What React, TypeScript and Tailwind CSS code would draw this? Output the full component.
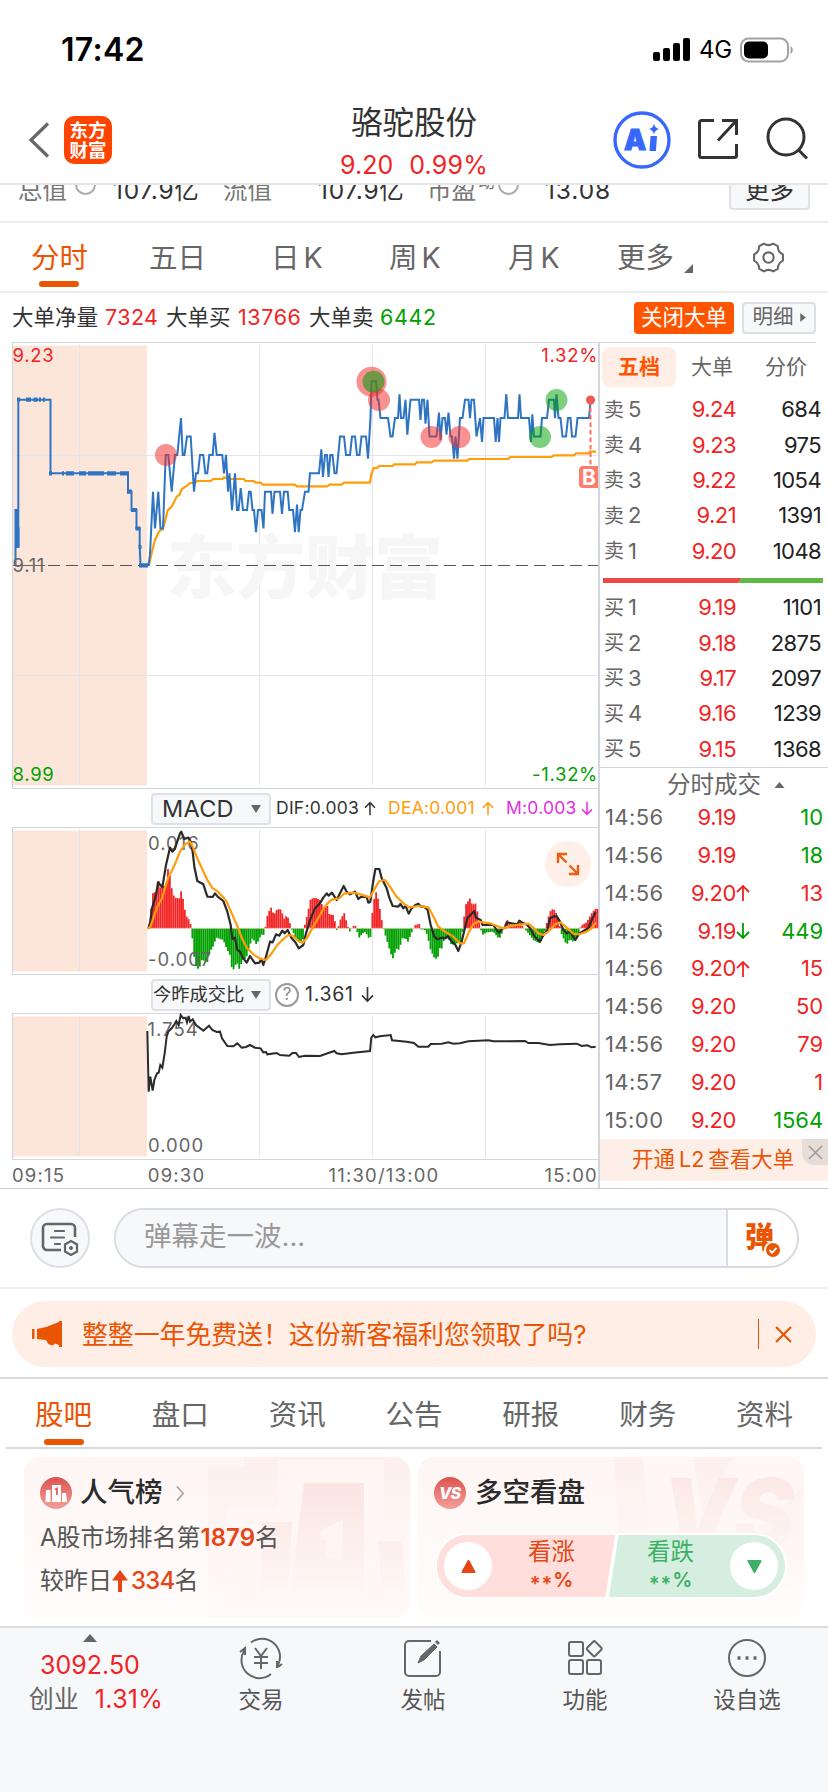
import type { ReactNode } from "react";

// Cada punto es [x, tick]; un tick equivale a 0.01 sobre el cierre anterior (9.11)
const PRE: [number, number][] = [
  [14.7, 0], [15.5, 0], [15.5, 3], [17.5, 3], [17.5, 1], [18.3, 1], [18.3, 9], [50.5, 9], [50.5, 5], [128, 5],
  [128, 4], [131.5, 4], [131.5, 3], [136.5, 3], [136.5, 2], [139.7, 2], [139.7, 1], [140.5, 0], [148.5, 0],
];

const PRICE: [number, number][] = [
  [148.5, 0], [150, 0.6], [153, 4], [155, 2], [158.3, 4], [160.5, 2], [163, 2], [165.7, 6], [168.3, 6], [171.7, 4],
  [175, 6], [177.3, 6], [181, 8], [182.7, 6], [184.5, 6], [187, 7], [190.7, 7], [194, 4], [196, 5], [198, 5],
  [200, 6], [203.3, 6], [205.3, 5], [207.3, 5], [209.3, 6], [212.7, 6], [214.5, 7.2], [216.7, 6], [222.3, 6],
  [224, 5], [226, 6], [228, 4], [229.5, 5], [232, 3], [235, 5], [237, 3], [238.5, 3], [240.7, 4.2], [243, 3],
  [247, 3], [249, 4], [250.7, 4], [252.5, 3], [254, 3], [256, 1.8], [258, 3], [261.5, 3], [263.5, 2], [265, 4],
  [271, 4], [272.5, 2.8], [274.5, 4], [280, 4], [282, 2.8], [284, 4], [287.7, 4], [289.3, 3], [293, 3], [295, 1.8],
  [297, 3.3], [298.7, 1.8], [300.5, 3], [302, 3], [305, 4], [308.5, 4], [310, 5], [319, 5], [321.3, 6.3], [323, 4.8],
  [325, 6], [327, 6], [328.5, 4.8], [330.3, 6], [332.5, 6], [334.5, 5], [336.5, 5], [340, 7], [344, 7], [346, 6],
  [350, 6], [352, 7], [355, 7], [357, 6], [359.5, 6], [361.5, 7], [366, 7], [368, 5.8], [370.5, 8], [371.5, 10],
  [376, 10], [377.5, 9], [378.5, 9], [380.5, 8], [388, 8], [390.5, 7], [392.5, 7], [395, 8], [398, 8], [399.5, 9.3],
  [401, 8], [403.5, 8], [405.5, 9], [407.3, 7.1], [410.5, 9], [419, 9], [420.5, 7.9], [422, 9], [424, 9], [425.5, 7.7],
  [427.5, 9], [429.5, 7], [436.5, 7], [439, 8.3], [440.5, 6.8], [442.5, 8], [445, 8], [446.5, 7.1], [448.5, 8.3],
  [450.5, 7], [452, 7], [454, 5.8], [455.5, 7], [457.5, 5.8], [460, 8], [462.5, 8], [465, 9], [468.5, 9], [470, 8],
  [471.5, 9], [474, 9], [476.5, 7], [480, 8], [482, 6.7], [483.5, 8], [494, 8], [495.7, 6.7], [497.5, 8], [499, 6.7],
  [500.5, 8], [504.5, 8], [506.3, 9.3], [508, 8], [518, 8], [519.5, 9.3], [521, 8], [529, 8], [531, 6.7], [532.3, 8.2],
  [534, 7], [540.5, 7], [542, 8], [547, 8], [549, 9], [554, 9], [555, 8], [556.5, 9.3], [558.5, 8], [560.5, 8],
  [562.5, 7], [566, 7], [568, 8], [570.5, 8], [572, 7], [575.5, 7], [577.5, 8], [589, 8], [590.7, 9], [594.5, 9],
];

const AVG =
  "441,706 448,700 455,670 465,630 478,603 488,598 495,575 503,541 515,530 530,500 538,495 545,478 560,468 570,459 585,458 592,453 632,453 640,447 668,447 672,442 688,447 732,447 736,453 760,453 768,458 782,458 788,464 885,464 890,469 982,469 988,464 1025,464 1032,458 1110,458 1113,438 1120,415 1132,413 1138,408 1178,408 1182,403 1245,403 1250,397 1295,397 1302,392 1402,392 1407,387 1525,387 1530,381 1655,381 1662,376 1722,376 1728,370 1765,370 1770,365 1788,365";

const DIF =
  "25,310 30,295 36,250 48,210 54,172 67,187 78,120 90,68 97,80 104,73 120,25 124,20 132,42 145,38 152,50 158,80 163,125 172,168 190,178 202,215 218,216 225,205 233,215 250,228 262,260 272,300 277,342 285,338 292,375 300,380 308,398 320,413 330,393 345,415 358,413 364,402 370,420 378,395 390,350 398,352 408,328 418,332 427,317 434,325 443,315 454,338 466,352 476,370 490,360 498,325 512,280 525,250 540,235 550,218 560,205 566,212 576,203 590,225 600,205 611,183 620,200 630,208 645,200 655,222 664,215 680,216 685,233 691,230 698,180 706,132 718,132 725,160 740,190 748,218 758,243 775,245 781,237 790,250 797,243 806,266 815,250 826,240 835,236 843,245 852,245 863,255 872,300 883,335 892,343 905,338 917,340 923,333 935,350 945,358 955,378 965,350 972,320 982,280 1003,258 1008,278 1022,285 1028,300 1060,300 1070,315 1078,323 1086,312 1095,308 1100,292 1115,295 1132,298 1138,287 1148,294 1160,298 1172,312 1182,332 1200,350 1210,330 1222,315 1230,280 1240,275 1250,273 1260,290 1270,315 1280,325 1290,320 1306,345 1318,325 1330,318 1345,310 1355,285 1367,262";

const DEA =
  "22,310 30,308 38,285 52,245 66,220 84,160 104,120 120,80 135,58 150,50 158,65 172,100 188,135 202,165 218,190 232,198 248,215 260,230 275,265 290,298 304,335 320,368 340,388 358,400 378,405 395,385 412,360 430,342 445,330 460,333 475,348 488,353 500,340 520,305 540,270 558,240 575,224 598,220 612,206 640,203 662,208 690,217 705,190 718,168 735,165 750,185 768,213 790,235 808,247 835,243 865,247 878,270 895,305 915,320 940,335 960,355 972,355 985,325 1000,297 1015,290 1050,295 1088,310 1115,302 1165,296 1180,308 1195,325 1210,330 1225,320 1245,298 1262,292 1280,308 1300,326 1318,328 1340,320 1355,310 1367,293";

const RATIO =
  "22,618 26,800 31,755 38,797 43,765 51,745 56,743 61,720 67,728 74,685 80,635 85,620 95,610 102,600 109,588 116,600 122,570 130,580 137,578 141,592 146,573 150,590 158,583 168,600 190,617 200,608 207,602 217,615 230,621 240,620 246,640 262,663 280,664 292,655 305,668 318,666 330,660 345,668 362,670 370,682 378,681 382,688 410,684 420,690 448,692 457,684 468,684 477,696 495,692 540,693 565,684 583,678 590,685 605,688 640,683 690,678 694,638 700,630 706,637 720,634 752,630 756,646 800,650 822,654 835,665 865,665 872,657 905,656 925,652 940,656 960,655 985,649 1045,646 1060,649 1155,648 1165,654 1195,654 1230,660 1260,658 1310,656 1325,663 1342,661 1355,667 1367,665";

// Histograma MACD: [x, altura], positivo en rojo y negativo en verde
const HIST: [number, number][] = [
  [25, 0], [30, 25], [38, 105], [50, 110], [57, 148], [62, 120], [70, 130], [77, 125], [84, 178], [92, 150], [97, 105],
  [105, 92], [118, 90], [125, 117], [131, 75], [138, 38], [148, 25], [154, 5], [156, -5], [158, -48], [164, -95],
  [170, -120], [178, -122], [184, -95], [195, -98], [202, -102], [210, -70], [222, -50], [228, -27], [240, -32],
  [250, -35], [260, -60], [270, -80], [277, -128], [283, -120], [290, -100], [298, -122], [308, -95], [318, -90],
  [328, -62], [335, -30], [342, -35], [350, -50], [358, -30], [368, -15], [374, -25], [377, 10], [383, 42], [393, 63],
  [402, 40], [412, 58], [424, 56], [432, 28], [440, 38], [447, 28], [453, 0], [458, -8], [468, -30], [478, -42],
  [488, -38], [493, -10], [495, 15], [502, 40], [512, 88], [525, 92], [540, 85], [550, 62], [562, 68], [568, 42],
  [580, 40], [587, 12], [590, -5], [594, 0], [602, 28], [613, 46], [620, 18], [626, -3], [630, -10], [634, 0],
  [645, 12], [650, -5], [658, -28], [668, -15], [676, -10], [688, -32], [694, -22], [697, 45], [703, 90], [709, 110],
  [715, 85], [722, 45], [728, 8], [733, -10], [742, -40], [752, -75], [760, -92], [768, -60], [778, -65], [786, -30],
  [797, -30], [804, -40], [812, -20], [820, 0], [826, 10], [838, 13], [845, -8], [852, 0], [862, -20], [872, -65],
  [885, -92], [893, -90], [900, -58], [908, -62], [912, -30], [925, -30], [935, -50], [950, -45], [962, -42],
  [968, -5], [972, 30], [978, 72], [990, 90], [997, 70], [1008, 75], [1014, 40], [1022, 0], [1027, -20], [1040, -12],
  [1060, -10], [1078, -32], [1088, -10], [1093, 5], [1102, 25], [1110, 8], [1122, 5], [1140, 20], [1150, 2],
  [1162, -10], [1180, -35], [1200, -45], [1212, -20], [1218, 8], [1230, 50], [1240, 60], [1252, 40], [1260, 5],
  [1266, -20], [1280, -50], [1290, -32], [1300, -40], [1315, -20], [1323, 8], [1340, 18], [1355, 45], [1365, 58],
  [1376, 58],
];

const valueAt = (x: number) => {
  const i = HIST.findIndex((p) => p[0] >= x);
  if (i <= 0) return 0;
  const [x0, y0] = HIST[i - 1];
  const [x1, y1] = HIST[i];
  return y0 + ((y1 - y0) * (x - x0)) / (x1 - x0);
};

const bars = Array.from({ length: 240 }, (_, i) => {
  const x = 25 + i * 5.625;
  return { x, v: valueAt(x + 2.8) };
});

const toPoints = (list: [number, number][]) =>
  list.map(([x, t]) => `${x},${(565.3 - t * 18.4).toFixed(1)}`).join(" ");

const sells = [
  ["5", "9.24", "684"],
  ["4", "9.23", "975"],
  ["3", "9.22", "1054"],
  ["2", "9.21", "1391"],
  ["1", "9.20", "1048"],
];

const buys = [
  ["1", "9.19", "1101"],
  ["2", "9.18", "2875"],
  ["3", "9.17", "2097"],
  ["4", "9.16", "1239"],
  ["5", "9.15", "1368"],
];

const trades = [
  { time: "14:56", price: "9.19", dir: "", vol: "10", up: false },
  { time: "14:56", price: "9.19", dir: "", vol: "18", up: false },
  { time: "14:56", price: "9.20", dir: "up", vol: "13", up: true },
  { time: "14:56", price: "9.19", dir: "down", vol: "449", up: false },
  { time: "14:56", price: "9.20", dir: "up", vol: "15", up: true },
  { time: "14:56", price: "9.20", dir: "", vol: "50", up: true },
  { time: "14:56", price: "9.20", dir: "", vol: "79", up: true },
  { time: "14:57", price: "9.20", dir: "", vol: "1", up: true },
  { time: "15:00", price: "9.20", dir: "", vol: "1564", up: false },
];

const Arrow = ({ down = false, className = "" }: { down?: boolean; className?: string }) => (
  <svg
    viewBox="0 0 14 18"
    fill="none"
    stroke="currentColor"
    strokeWidth="1.8"
    className={`shrink-0 ${down ? "rotate-180" : ""} ${className}`}
  >
    <path d="M7 17V2M1 8l6-6 6 6" />
  </svg>
);

const StatusBar = () => (
  <div className="flex h-[98px] items-center justify-between pt-[2px] pr-[34px] pl-[61px]">
    <span className="text-[32px] font-semibold tracking-[0.3px] text-black">17:42</span>
    <div className="flex items-center">
      <svg viewBox="0 0 38 24" className="h-6 w-[38px]">
        <rect x="0" y="14" width="7" height="9" rx="2" />
        <rect x="10" y="10" width="7" height="13" rx="2" />
        <rect x="20" y="5" width="7" height="18" rx="2" />
        <rect x="30" y="0" width="7" height="23" rx="2" />
      </svg>
      <span className="ml-[8px] w-[41px] text-[24px] tracking-[-0.3px] text-black">4G</span>
      <svg viewBox="0 0 54 26" className="h-[26px] w-[54px]">
        <rect x="1" y="1.5" width="47" height="23" rx="7.5" fill="none" stroke="#a3a3a3" strokeWidth="2" />
        <rect x="4" y="4.5" width="24" height="17" rx="5" />
        <path d="M50.5 9c3 1.5 3 6.500 0 8z" fill="#a3a3a3" />
      </svg>
    </div>
  </div>
);

const Header = () => (
  <header className="flex h-[87px] justify-between border-b-2 border-[#e6e6e8] pr-[19px] pl-[28px]">
    <div className="mt-[18px] flex w-[281px] items-start">
      <svg viewBox="0 0 22 36" className="mt-[6px] h-9 w-[22px]" fill="none" stroke="#666" strokeWidth="3.2">
        <path d="M20 1.5L3 18l17 16.5" />
      </svg>
      <div className="ml-[14px] flex size-12 flex-col items-center justify-center rounded-[10px] bg-[#ff4400] text-[18.5px] leading-[20px] font-bold text-white">
        <span>东方</span>
        <span>财富</span>
      </div>
    </div>
    <div className="flex w-[190px] flex-col items-center">
      <span className="mt-[5px] text-[31.5px] leading-[40px] text-[#333]">骆驼股份</span>
      <div className="mt-[4px] flex gap-[16px] text-[25px] leading-[36px] text-[#f22323]">
        <span>9.20</span>
        <span className="tracking-[0.2px]">0.99%</span>
      </div>
    </div>
    <div className="mt-[13px] flex w-[290px] items-start justify-end">
      <svg viewBox="0 0 58 58" className="mr-[26px] size-[58px]">
        <circle cx="29" cy="29" r="27" fill="none" stroke="#3768fb" strokeWidth="3.4" />
        <text x="11" y="39" fontSize="28" fontWeight="900" fill="#3768fb" stroke="#3768fb" strokeWidth="1">A</text>
        <path d="M37.5 25h6.500l-1 15h-6.500z" fill="#3768fb" />
        <path d="M41 12.500q.8 4.500 5 5.500-4.200 1-5 5.500-.8-4.500-5-5.500 4.200-1 5-5.500z" fill="#3768fb" />
      </svg>
      <svg viewBox="0 0 42 42" className="mt-[7px] mr-[26px] size-[42px]" fill="none" stroke="#333" strokeWidth="3">
        <path d="M17 2.500H4.500a2 2 0 0 0-2 2v33a2 2 0 0 0 2 2h33a2 2 0 0 0 2-2V26M25 2.500h14.500V17M39.500 2.500L21 22.500" />
      </svg>
      <svg viewBox="0 0 44 44" className="mt-[6px] size-[44px]" fill="none" stroke="#333" strokeWidth="3">
        <circle cx="21" cy="20" r="18" />
        <path d="M33 32.500l9 9" />
      </svg>
    </div>
  </header>
);

const Ring = ({ className = "" }: { className?: string }) => (
  <span className={`size-[21px] shrink-0 rounded-full border-2 border-[#aaa] ${className}`} />
);

// Fila de datos que queda cortada bajo la cabecera al hacer scroll
const SummaryRow = () => (
  <div className="h-[38px] overflow-hidden border-b-2 border-[#ececee]">
    <div className="-mt-[18px] flex h-[46px] items-center pl-[18px] text-[24.5px] text-[#333]">
      <span className="w-[57px] text-[#777]">总值</span>
      <Ring className="-mt-[12px]" />
      <span className="ml-[17px] w-[110px] tracking-[0.7px]">107.9亿</span>
      <span className="w-[95px] text-[#777]">流值</span>
      <span className="w-[109px] tracking-[0.7px]">107.9亿</span>
      <span className="w-[51px] text-[#777]">市盈</span>
      <span className="-mt-[15px] w-[20px] text-[17px] text-[#777]">动</span>
      <Ring className="-mt-[12px]" />
      <span className="ml-[26px] w-[184px] tracking-[0.9px]">13.08</span>
      <span className="flex h-[40px] w-[81px] items-center justify-center rounded-[4px] border-2 border-[#dfe1e6] bg-[#f7f8fa]">
        更多
      </span>
    </div>
  </div>
);

const PeriodTabs = () => (
  <nav className="flex h-[70px] items-start border-b-2 border-[#ececee] pt-[15px] pl-[31px] text-[28.5px] leading-[40px] text-[#666]">
    <div className="flex w-[118px] flex-col text-[#ea5504]">
      <span>分时</span>
      <span className="mt-[3px] ml-[8px] h-[6px] w-[40px] rounded-[3px] bg-[#ea5504]" />
    </div>
    <span className="w-[122px]">五日</span>
    <span className="w-[118px]">日<span className="ml-[4px]">K</span></span>
    <span className="w-[119px]">周<span className="ml-[4px]">K</span></span>
    <span className="w-[109px]">月<span className="ml-[4px]">K</span></span>
    <span className="w-[67px]">更多</span>
    <svg viewBox="0 0 10 10" className="mt-[26px] mr-[59px] size-[9px]" fill="#666">
      <path d="M10 0v10H0z" />
    </svg>
    <svg viewBox="0 0 32 32" className="mt-[3px] size-[33px]" fill="none" stroke="#666" strokeWidth="2" strokeLinejoin="round">
      <path d="M11.500 2.500Q16 5.500 20.500 2.500L25 5Q25 10.500 30 13V19Q25 21.500 25 27L20.500 29.500Q16 26.500 11.500 29.500L7 27Q7 21.500 2 19V13Q7 10.500 7 5Z" />
      <circle cx="16" cy="16" r="5" />
    </svg>
  </nav>
);

const BigOrderRow = () => (
  <div className="flex h-[50px] items-center pr-[12px] pb-[1px] pl-[12px] text-[21.5px] text-[#333]">
    <span className="w-[93px]">大单净量</span>
    <span className="w-[61px] tracking-[0.4px] text-[#f22323]">7324</span>
    <span className="w-[72px]">大单买</span>
    <span className="w-[71px] tracking-[0.6px] text-[#f22323]">13766</span>
    <span className="w-[71px]">大单卖</span>
    <span className="tracking-[0.6px] text-[#00a000]">6442</span>
    <span className="ml-auto flex h-[32px] w-[100px] items-center justify-center rounded-[4px] bg-[#ff5500] text-white">关闭大单</span>
    <span className="ml-[8px] flex h-[32px] w-[74px] items-center justify-center rounded-[4px] border-2 border-[#dcdfe6] bg-[#f7f8fa] text-[20.5px] text-[#666]">
      明细
      <svg viewBox="0 0 6 10" className="ml-[6px] h-[9px] w-[6px]" fill="#666">
        <path d="M0 0l6 5-6 5z" />
      </svg>
    </span>
  </div>
);

const Grid = ({ top, bottom }: { top: number; bottom: number }) => (
  <>
    <rect x="13" y={top + 3} width="134" height={bottom - top - 6} fill="#fce6da" />
    <path
      d={[79.5, 259.5, 372.5, 485.5].map((x) => `M${x} ${top + 2}V${bottom - 3}`).join("")}
      stroke="#e3e4ec"
    />
    <path d={`M12.5 ${bottom}V${top}H599M12 ${bottom}H599`} fill="none" stroke="#d3d6dd" strokeWidth="1.2" />
  </>
);

const PriceChart = () => (
  <svg viewBox="0 342 600 447" className="block h-[447px] w-[600px] shrink-0" fontSize="18.5">
    <Grid top={342.5} bottom={788.5} />
    <path d="M13 455.500H598M13 675.500H598" stroke="#e3e4ec" />
    <text x="167" y="593" fontSize="69" fontWeight="900" fill="#f6f6f6">东方财富</text>
    <path d="M34 565.500H598" stroke="#555" strokeDasharray="12 6" strokeDashoffset="-14" />
    <path d="M13 565.500H45" stroke="#666" />
    <g fill="none" strokeWidth="2">
      <g transform="translate(0 330) scale(.33333)" stroke="#ff9d0a" strokeWidth="2.2">
        <polyline vectorEffect="non-scaling-stroke" points={AVG} />
      </g>
      <g stroke="#2f74c3">
        <polyline points={toPoints(PRE)} />
        <path d="M15 529h3v17h-3M17 510v36" strokeWidth="3" />
        <path
          d="M17 399.700h3M26 399.700h5M33.500 399.700h4M39 399.700h2M43 399.700h2M49 473.300h3M62 473.300h2M66 473.300h8M79 473.300h7M88 473.300h16M107 473.300h9M120 473.300h9M127 491.700h5M131 510h6M135.500 528.500h5M138.500 547h3M139 565.300h9"
          strokeWidth="4.2"
        />
        <polyline points={toPoints(PRICE)} />
      </g>
    </g>
    <g fill="#f42c2c" fillOpacity=".52">
      <circle cx="166" cy="455" r="11" />
      <circle cx="371.5" cy="381.7" r="15" />
      <circle cx="379" cy="400" r="11" />
      <circle cx="431.5" cy="437" r="11" />
      <circle cx="459.5" cy="437" r="11" />
    </g>
    <circle cx="373.5" cy="381.7" r="11" fill="#2f9a20" fillOpacity=".68" />
    <g fill="#00a000" fillOpacity=".5">
      <circle cx="556.5" cy="400" r="11" />
      <circle cx="540" cy="437" r="11" />
    </g>
    <path d="M590.500 400v66" stroke="#ff6f61" strokeWidth="2" strokeDasharray="4.5 3" />
    <circle cx="590.5" cy="400" r="4.5" fill="#ee5b54" />
    <path d="M598 466h-15a4 4 0 0 0-4 4v14a4 4 0 0 0 4 4h15z" fill="#ff7c6d" />
    <text x="582" y="484.5" fontSize="21" fontWeight="700" fill="#fff">B</text>
    <g letterSpacing=".7">
      <text x="12.5" y="361.5" fill="#f22323">9.23</text>
      <text x="598" y="361.5" fill="#f22323" textAnchor="end">1.32%</text>
      <text x="12.5" y="572" fill="#666">9.11</text>
      <text x="12.5" y="780.5" fill="#00a000">8.99</text>
      <text x="598" y="780.5" fill="#00a000" textAnchor="end">-1.32%</text>
    </g>
  </svg>
);

const Select = ({ children, className }: { children: ReactNode; className: string }) => (
  <span className={`flex h-[32px] w-[120px] shrink-0 items-center rounded-[4px] border-2 border-[#dee1e7] bg-[#f7f8fa] text-[#333] ${className}`}>
    {children}
    <svg viewBox="0 0 10 8" className="mr-[8px] ml-auto h-[8px] w-[10px]" fill="#666">
      <path d="M0 0h10L5 8z" />
    </svg>
  </span>
);

const MacdChart = () => (
  <>
    <div className="flex h-[38px] items-center pt-px pl-[151px] text-[17.5px] tracking-[0.25px] text-[#333]">
      <Select className="pl-[9px] text-[23.5px]">MACD</Select>
      <span className="ml-[5px] w-[88px]">DIF:0.003</span>
      <Arrow className="h-[15px] w-[12px]" />
      <span className="ml-[12px] w-[94px] text-[#ff9d0a]">DEA:0.001</span>
      <Arrow className="h-[15px] w-[12px] text-[#ff9d0a]" />
      <span className="ml-[12px] w-[75px] text-[#e22fe2]">M:0.003</span>
      <Arrow down className="h-[15px] w-[12px] text-[#e22fe2]" />
    </div>
    <div className="relative">
      <svg viewBox="0 827 600 148" className="block h-[148px] w-[600px]" fontSize="18.5">
        <Grid top={827.5} bottom={974.5} />
        <g transform="translate(140 825) scale(.33333)">
          {bars.map(({ x, v }) => (
            <rect
              key={x}
              x={x}
              y={v > 0 ? 310 - v : 310}
              width="5.4"
              height={Math.abs(v)}
              fill={v > 0 ? "#f42323" : "#00a000"}
            />
          ))}
          <path d="M25 310H1374" stroke="#f0c8b8" strokeWidth="2" />
        </g>
        <text x="148" y="849.5" fill="#666" letterSpacing="1">0.016</text>
        <text x="148" y="965.5" fill="#666" letterSpacing="1">-0.007</text>
        <g transform="translate(140 825) scale(.33333)" fill="none" strokeWidth="2.2" strokeLinejoin="round">
          <polyline vectorEffect="non-scaling-stroke" stroke="#2b2b2b" points={DIF} />
          <polyline vectorEffect="non-scaling-stroke" stroke="#ff9d0a" points={DEA} />
        </g>
      </svg>
      <span className="absolute top-[14px] right-[7px] flex size-[46px] items-center justify-center rounded-full bg-[#fef0e8]">
        <svg viewBox="0 0 24 24" className="size-[24px]" fill="none" stroke="#ee5d10" strokeWidth="2.4">
          <path d="M2 11V2h9M2 2l8.500 8.500M22 13v9h-9M22 22l-8.500-8.500" />
        </svg>
      </span>
    </div>
  </>
);

const RatioChart = () => (
  <>
    <div className="flex h-[38px] items-center pt-px pl-[151px] text-[19.5px] text-[#333]">
      <Select className="text-[18.3px]">今昨成交比</Select>
      <span className="ml-[4px] flex size-[24px] items-center justify-center rounded-full border-2 border-[#999] text-[17px] text-[#888]">
        ?
      </span>
      <span className="ml-[6px] w-[55px] tracking-[0.7px]">1.361</span>
      <Arrow down className="ml-px h-[17px] w-[13px]" />
    </div>
    <svg viewBox="0 1013 600 147" className="block h-[147px] w-[600px]" fontSize="18.5">
      <Grid top={1013.5} bottom={1159.5} />
      <text x="147.5" y="1035.5" fill="#666" letterSpacing="1">1.754</text>
      <text x="148" y="1151.5" fill="#666" letterSpacing="1">0.000</text>
      <polyline
        transform="translate(140 825) scale(.33333)"
        vectorEffect="non-scaling-stroke"
        fill="none"
        stroke="#2b2b2b"
        strokeWidth="2"
        points={RATIO}
      />
    </svg>
    <div className="flex h-[28px] items-center pt-[3px] pl-[12px] text-[18.5px] tracking-[1.2px] text-[#666]">
      <span className="w-[136px]">09:15</span>
      <span className="w-[181px]">09:30</span>
      <span className="w-[200px]">11:30/13:00</span>
      <span className="w-[70px] text-right">15:00</span>
    </div>
  </>
);

const Level = ({ side, row }: { side: string; row: string[] }) => (
  <div className="flex h-[35.4px] items-center pr-[7px] pl-[4px] text-[22px] tracking-[-0.6px]">
    <span className="w-[24px] text-[20px] text-[#666]">{side}</span>
    <span className="w-[40px] text-[#666]">{row[0]}</span>
    <span className="w-[68px] text-right text-[#f22323]">{row[1]}</span>
    <span className="ml-auto text-[#222]">{row[2]}</span>
  </div>
);

const OrderBook = () => (
  <aside className="flex w-[230px] flex-col border-l-2 border-[#d3d6dd]">
    <div className="mr-[12px] border-t border-[#d3d6dd]" />
    <div className="mt-[4px] flex h-[40px] items-center pl-[2px] text-[21px] text-[#666]">
      <span className="flex h-[40px] w-[74px] items-center justify-center rounded-[8px] bg-[#ffeee5] font-bold text-[#ff5500]">五档</span>
      <span className="ml-[15px] w-[74px]">大单</span>
      <span>分价</span>
    </div>
    <div className="mt-[5px]">
      {sells.map((row) => (
        <Level key={row[0]} side="卖" row={row} />
      ))}
    </div>
    <svg viewBox="0 0 220 5" className="mt-[9px] mb-[7px] ml-[3px] h-[5px] w-[220px] shrink-0">
      <path d="M0 0h139l-4 5H0z" fill="#ec4848" />
      <path d="M139 0h81v5h-85z" fill="#5db946" />
    </svg>
    <div>
      {buys.map((row) => (
        <Level key={row[0]} side="买" row={row} />
      ))}
    </div>
    <div className="flex h-[32px] shrink-0 items-center border-t border-[#d3d6dd] pt-[3px] pl-[67px] text-[23.5px] text-[#666]">
      分时成交
      <svg viewBox="0 0 10 6" className="ml-[13px] h-[6px] w-[11px]" fill="#666">
        <path d="M0 6l5-6 5 6z" />
      </svg>
    </div>
    {trades.map((t, i) => (
      <div key={i} className="flex h-[37.8px] shrink-0 items-center pr-[5px] pl-[5px] text-[22px] tracking-[-0.4px]">
        <span className="w-[66px] tracking-[0.4px] text-[#666]">{t.time}</span>
        <span className="w-[65px] text-right text-[#f22323]">{t.price}</span>
        {t.dir === "up" && <Arrow className="h-[18px] w-[14px] text-[#f22323]" />}
        {t.dir === "down" && <Arrow down className="h-[18px] w-[14px] text-[#00a000]" />}
        <span className={`ml-auto tracking-[-0.1px] ${t.up ? "text-[#f22323]" : "text-[#00a000]"}`}>{t.vol}</span>
      </div>
    ))}
    <div className="relative flex h-[42px] shrink-0 items-center bg-[#fdefe8] pb-[2px] pl-[32px] text-[21.5px] text-[#ea5504]">
      开通<span className="mx-[4px]">L2</span>查看大单
      <span className="absolute top-0 right-0 flex size-[26px] items-center justify-center rounded-bl-[12px] bg-[#e6dcd8]">
        <svg viewBox="0 0 16 16" className="size-[15px]" fill="none" stroke="#999" strokeWidth="1.6">
          <path d="M1 1l14 14M15 1L1 15" />
        </svg>
      </span>
    </div>
  </aside>
);

const CommentBar = () => (
  <div className="flex h-[101px] items-center border-t border-b-2 border-t-[#c9ccd3] border-b-[#ececee] pl-[30px]">
    <span className="flex size-[60px] items-center justify-center rounded-full border-2 border-[#dcdfe6] bg-[#f7f8fa]">
      <svg viewBox="0 0 38 34" className="mt-[2px] h-[34px] w-[38px]" fill="none" stroke="#666" strokeWidth="2.6">
        <path d="M20 28H6a4 4 0 0 1-4-4V6a4 4 0 0 1 4-4h24a4 4 0 0 1 4 4v9" />
        <path d="M14 9h9M10 15.500h13M14 22h5" strokeLinecap="round" strokeWidth="2.2" />
        <path d="M30 19l6 3.500v7L30 33l-6-3.500v-7z" strokeWidth="2.2" />
        <circle cx="30" cy="26" r="1.5" fill="#666" strokeWidth="1" />
      </svg>
    </span>
    <div className="ml-[24px] flex h-[60px] w-[685px] overflow-hidden rounded-full border-2 border-[#d8dbe2]">
      <span className="flex w-[612px] items-center border-r-2 border-[#d8dbe2] bg-[#f7f8fa] pb-[3px] pl-[28px] text-[27.5px] text-[#999]">弹幕走一波...</span>
      <span className="relative pl-[17px] text-[29px] leading-[56px] font-black text-[#ea5504]">
        弹
        <svg viewBox="0 0 18 18" className="absolute top-[31px] left-[36px] size-[18px]">
          <circle cx="9" cy="9" r="8" fill="#ea5504" stroke="#fff" strokeWidth="2" />
          <path d="M5.500 9l2.500 2.800 4.500-5" fill="none" stroke="#fff" strokeWidth="1.8" />
        </svg>
      </span>
    </div>
  </div>
);

const Promo = () => (
  <div className="h-[90px] border-b-2 border-[#d8dae0] pt-[12px]">
    <div className="mx-[12px] flex h-[66px] items-center rounded-full bg-[#feeee6] pr-[24px] pl-[20px] text-[26px] tracking-[-0.15px] text-[#ea5504]">
      <svg viewBox="0 0 30 26" className="mr-[20px] h-[26px] w-[30px]" fill="#ea5504">
        <path d="M0 8h2.500v10H0zM5 8l9-2L27 1V0h3v26h-3v-2l-4-1.500c-1 2.500-5 2-7 0L14 19l-9-1z" />
      </svg>
      整整一年免费送！这份新客福利您领取了吗?
      <span className="ml-auto h-[30px] w-[1.5px] bg-[#ea5504]" />
      <svg viewBox="0 0 16 16" className="ml-[16px] size-[17px]" fill="none" stroke="#ea5504" strokeWidth="2">
        <path d="M1 1l14 14M15 1L1 15" />
      </svg>
    </div>
  </div>
);

const SectionTabs = () => (
  <nav className="mx-[6px] flex h-[70px] justify-between border-b-2 border-[#d8dae0] px-[29px] pt-[16px] text-[28.5px] leading-[40px] text-[#666]">
    {["股吧", "盘口", "资讯", "公告", "研报", "财务", "资料"].map((name, i) => (
      <div key={name} className={`flex flex-col items-center ${i === 0 ? "text-[#ea5504]" : ""}`}>
        <span>{name}</span>
        {i === 0 && <span className="mt-[4px] h-[6px] w-[40px] rounded-[3px] bg-[#ea5504]" />}
      </div>
    ))}
  </nav>
);

const Badge = ({ children }: { children: ReactNode }) => (
  <svg viewBox="0 0 32 32" className="size-[32px]">
    <defs>
      <linearGradient id="badge" x1="0" y1="0" x2="0" y2="1">
        <stop offset="0" stopColor="#dc5350" />
        <stop offset="1" stopColor="#f3a09b" />
      </linearGradient>
    </defs>
    <circle cx="16" cy="16" r="16" fill="url(#badge)" />
    {children}
  </svg>
);

const Cards = () => (
  <div className="flex h-[177px] gap-[8px] px-[24px] pt-[8px]">
    <section className="relative h-[161px] w-[386px] overflow-hidden rounded-[16px] bg-linear-to-b from-[#fef6f4] to-[#fffcfb] pt-[16px] pl-[16px] text-[24px] text-[#555]">
      <svg viewBox="0 0 386 161" className="absolute inset-0 h-full w-full">
        <defs>
          <linearGradient id="podium" x1="0" y1="0" x2="0" y2="1">
            <stop offset="0" stopColor="#fbe5e2" />
            <stop offset="1" stopColor="#fef8f6" />
          </linearGradient>
          <linearGradient id="halo" x1="0" y1="0" x2="0" y2="1">
            <stop offset="0" stopColor="#fdf0ee" />
            <stop offset="1" stopColor="#fffaf9" />
          </linearGradient>
        </defs>
        <path d="M184 9h36V0h166v161H184z" fill="url(#halo)" />
        <path d="M203 51h51V3h106v60h26v98H203z" fill="#fff8f6" fillOpacity=".7" />
        <path d="M280 26h60v115h-75zM238 65h30l-4 76h-28zM354 84h24l4 57h-24z" fill="url(#podium)" />
        <path d="M297 73l22-10-2 38h-15V83l-6 1z" fill="#fff6f4" />
      </svg>
      <div className="relative flex h-[40px] items-center">
        <Badge>
          <path d="M6 13h4.500v12H5.500zM12 8h9v17h-9zM22 16h4l1 9h-5z" fill="#fff" />
          <path d="M15 12.500l2-1V18" fill="none" stroke="#e0605c" strokeWidth="1.8" />
        </Badge>
        <span className="ml-[8px] text-[27.5px] font-medium text-[#2b2b2b]">人气榜</span>
        <svg viewBox="0 0 10 18" className="ml-[13px] h-[17px] w-[9px]" fill="none" stroke="#aaa" strokeWidth="2">
          <path d="M1 1l7 8-7 8" />
        </svg>
      </div>
      <div className="relative mt-[7px] h-[36px] leading-[36px]">
        A股市场排名第<span className="font-semibold text-[#e54615]">1879</span>名
      </div>
      <div className="relative mt-[7px] flex h-[36px] items-center">
        较昨日
        <svg viewBox="0 0 16 22" className="mr-[3px] h-[22px] w-[16px]" fill="#e54615">
          <path d="M8 0l8 10.500h-6V22H6V10.500H0z" />
        </svg>
        <span className="font-medium tracking-[-0.8px] text-[#e54615]">334</span>名
      </div>
    </section>
    <section className="relative h-[161px] w-[386px] overflow-hidden rounded-[16px] bg-linear-to-b from-[#fef6f4] to-[#fffcfb] pt-[16px] pl-[16px]">
      <svg viewBox="0 0 386 161" className="absolute inset-0 h-full w-full">
        <path d="M196 0h190v140L300 80l-60 60h-36z" fill="url(#halo)" />
        <path d="M225 0h50l10 60 30-60h71v30l-90 80h-60z" fill="#fff8f6" fillOpacity=".8" />
        <text x="244" y="91" fontSize="96" fontWeight="900" fontStyle="italic" fill="url(#podium)" textLength="132" lengthAdjust="spacingAndGlyphs">VS</text>
      </svg>
      <div className="relative flex h-[40px] items-center">
        <Badge>
          <text x="15.5" y="22" fontSize="16" fontWeight="800" fontStyle="italic" textAnchor="middle" fill="#fff" letterSpacing="-1">VS</text>
        </Badge>
        <span className="ml-[9px] text-[27.5px] font-medium text-[#2b2b2b]">多空看盘</span>
      </div>
      <div className="relative mt-[20px] ml-[1px] flex h-[66px] w-[352px] overflow-hidden rounded-full border-2 border-white">
        <svg viewBox="0 0 348 62" className="absolute inset-0 h-full w-full" preserveAspectRatio="none">
          <path d="M0 0h348v62H0z" fill="#d6eedf" />
          <path d="M0 0h180l-10 62H0z" fill="#ffdedb" />
          <path d="M180 -1l-10 64" stroke="#fff" strokeWidth="3.5" />
        </svg>
        <div className="relative flex w-full items-center justify-between px-[7px]">
          <span className="flex size-[48px] items-center justify-center rounded-full bg-white">
            <svg viewBox="0 0 16 13" className="h-[13px] w-[17px]" fill="#e54615" stroke="#e54615" strokeWidth="2" strokeLinejoin="round">
              <path d="M8 1l6 11H2z" />
            </svg>
          </span>
          <div className="flex flex-1 flex-col items-center text-[23.5px] leading-[28px] text-[#e54615]">
            <span>看涨</span>
            <span className="text-[20px] font-semibold"><span className="relative top-[4px] tracking-[1px]">**</span>%</span>
          </div>
          <div className="flex flex-1 flex-col items-center text-[23.5px] leading-[28px] text-[#3cb166]">
            <span>看跌</span>
            <span className="text-[20px] font-semibold"><span className="relative top-[4px] tracking-[1px]">**</span>%</span>
          </div>
          <span className="flex size-[48px] items-center justify-center rounded-full bg-white">
            <svg viewBox="0 0 16 13" className="h-[13px] w-[17px]" fill="#3cb166" stroke="#3cb166" strokeWidth="2" strokeLinejoin="round">
              <path d="M8 12L2 1h12z" />
            </svg>
          </span>
        </div>
      </div>
    </section>
  </div>
);

const NavItem = ({ label, children }: { label: string; children: ReactNode }) => (
  <div className="flex w-[162px] flex-col items-center text-[22.5px] leading-[32px] text-[#555]">
    <svg viewBox="0 0 44 44" className="mt-[8px] mb-[4px] size-[44px]" fill="none" stroke="#666" strokeWidth="2">
      {children}
    </svg>
    {label}
  </div>
);

const BottomNav = () => (
  <footer className="flex h-[166px] border-t-2 border-[#dcdee2] bg-[#f7f8fa]">
    <div className="flex w-[180px] flex-col items-center text-[25px] leading-[34px] text-[#f22323]">
      <svg viewBox="0 0 14 8" className="mt-[6px] h-[8px] w-[14px]" fill="#666">
        <path d="M0 8l7-8 7 8z" />
      </svg>
      <span className="mt-[6px]">3092.50</span>
      <span className="ml-[12px] tracking-[0.3px]">
        <span className="mr-[16px] tracking-normal text-[#666]">创业</span>1.31%
      </span>
    </div>
    <NavItem label="交易">
      <path d="M12 6.500A18 18 0 0 1 39 29l-1 2.500M39 31l4-3M38 32v-7M32 38A18 18 0 0 1 5 15l.5-1.500M1 16l5-4v7" />
      <path d="M16 12l6 8 6-8M22 20v13M15 21h14M15 27h14" />
    </NavItem>
    <NavItem label="发帖">
      <path d="M30 5H8a4 4 0 0 0-4 4v27a4 4 0 0 0 4 4h27a4 4 0 0 0 4-4V15" />
      <path d="M17 27l3-7L33 8l3 3-13 13z" fill="#666" strokeWidth="1" />
      <path d="M35.500 7.500l2-2" strokeWidth="4" />
    </NavItem>
    <NavItem label="功能">
      <rect x="6" y="6" width="14" height="14" rx="2" />
      <rect x="6" y="24" width="14" height="14" rx="2" />
      <rect x="24" y="24" width="14" height="14" rx="2" />
      <rect x="25.5" y="7" width="11.5" height="11.5" rx="1.5" transform="rotate(45 31.250 12.750)" />
    </NavItem>
    <NavItem label="设自选">
      <circle cx="22" cy="22" r="18" />
      <path d="M12.500 22h3M20.500 22h3M28.500 22h3" strokeWidth="3.5" />
    </NavItem>
  </footer>
);

const App = () => {
  return (
    <div className="w-[828px] overflow-hidden bg-white font-['Inter','Noto_Sans_CJK_SC',sans-serif]">
      <StatusBar />
      <Header />
      <SummaryRow />
      <PeriodTabs />
      <BigOrderRow />
      <div className="-mt-px flex h-[846px]">
        <div className="flex w-[598px] shrink-0 flex-col">
          <PriceChart />
          <MacdChart />
          <RatioChart />
        </div>
        <OrderBook />
      </div>
      <CommentBar />
      <Promo />
      <SectionTabs />
      <Cards />
      <BottomNav />
    </div>
  );
};

export default App;
